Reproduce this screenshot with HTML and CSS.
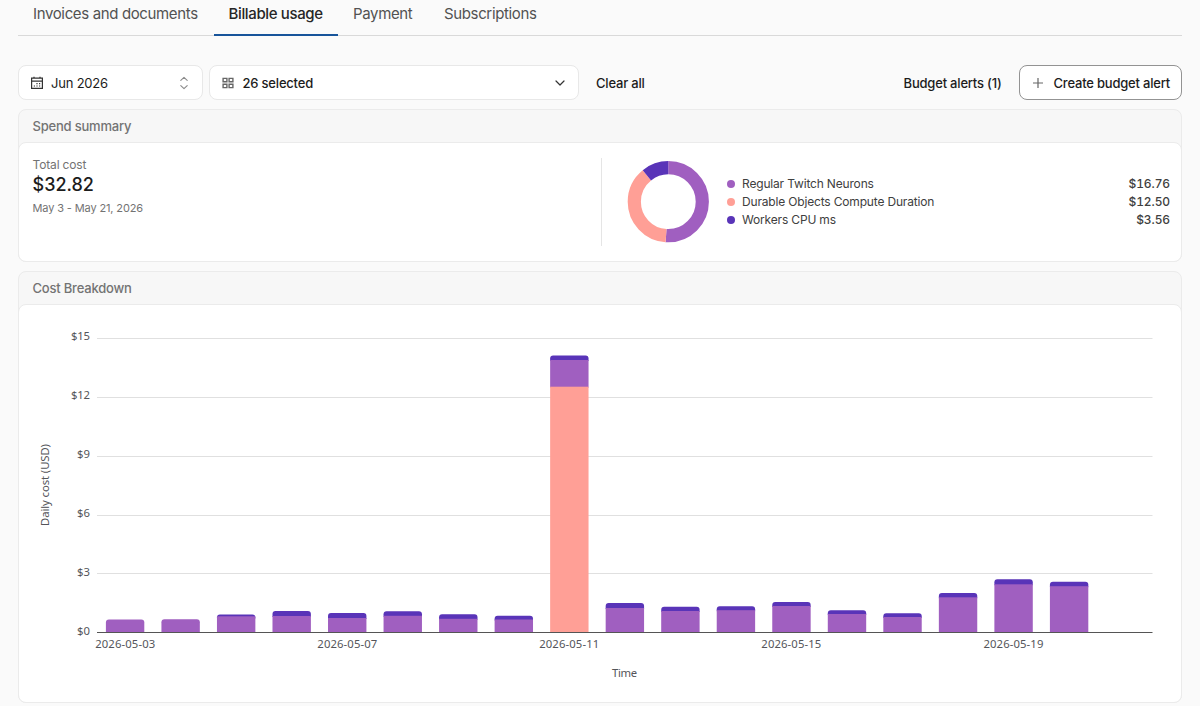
FILE: index.html
```html
<!DOCTYPE html>
<html lang="en">
<head>
<meta charset="utf-8">
<title>Billable usage</title>
<link rel="stylesheet" href="styles.css">
</head>
<body>
<nav class="tabs">
  <a class="tab t1">Invoices and documents</a>
  <a class="tab t2 active">Billable usage</a>
  <a class="tab t3">Payment</a>
  <a class="tab t4">Subscriptions</a>
</nav>
<div class="toolbar">
  <div class="control month">
    <svg width="14" height="14" viewBox="0 0 14 14" fill="none" stroke="#333" stroke-width="1.2"><path d="M1.6 2.1h10.8v10.3H1.6zM1.6 5.2h10.8M4 .8v2M10 .8v2"/><path d="M6.4 7.7h1.2M9 7.7h1.2M3.8 10h1.2M6.4 10h1.2M9 10h1.2"/></svg>
    <span class="label">Jun 2026</span>
    <svg class="end" width="10" height="14" viewBox="0 0 10 14" fill="none" stroke="#8a8a8a" stroke-width="1.1" stroke-linecap="round" stroke-linejoin="round"><path d="M1.8 4.3 5 1.3l3.2 3M1.8 9.7 5 12.7l3.2-3"/></svg>
  </div>
  <div class="control picker">
    <svg width="12" height="12" viewBox="0 0 12 12" fill="none" stroke="#666" stroke-width="1.4"><path d="M1.1 1.4h3.8v3.4H1.1zM7.1 1.4h3.8v3.4H7.1zM1.1 7.2h3.8v3.4H1.1zM7.1 7.2h3.8v3.4H7.1z"/></svg>
    <span class="label">26 selected</span>
    <svg class="end" width="12" height="8" viewBox="0 0 12 8" fill="none" stroke="#333" stroke-width="1.2" stroke-linecap="round" stroke-linejoin="round"><path d="M2 2l4 4 4-4"/></svg>
  </div>
  <span class="link clear">Clear all</span>
  <span class="link alerts">Budget alerts (1)</span>
  <button class="create"><svg width="12" height="12" viewBox="0 0 12 12" fill="none" stroke="#666" stroke-width="1.2"><path d="M6 1v10M1 6h10"/></svg><span>Create budget alert</span></button>
</div>
<section class="card">
  <h2 class="heading">Spend summary</h2>
  <div class="body summary">
    <div class="total">
      <div class="caption">Total cost</div>
      <div class="amount">$32.82</div>
      <div class="range">May 3 - May 21, 2026</div>
    </div>
    <div class="split">
      <svg class="donut" width="82" height="82" viewBox="-41 -41 82 82" fill="none" stroke-width="13.2">
        <g transform="translate(.3 -.3) rotate(-90)">
          <circle r="34" pathLength="100" stroke="#a05fc0" stroke-dasharray="51.07 48.93"/>
          <circle r="34" pathLength="100" stroke="#ff9f96" stroke-dasharray="38.09 61.91" stroke-dashoffset="-51.07"/>
          <circle r="34" pathLength="100" stroke="#5934b8" stroke-dasharray="10.84 89.16" stroke-dashoffset="-89.16"/>
        </g>
      </svg>
      <div class="legend">
        <div class="entry"><i class="dot purple"></i><span>Regular Twitch Neurons</span><b>$16.76</b></div>
        <div class="entry"><i class="dot coral"></i><span>Durable Objects Compute Duration</span><b>$12.50</b></div>
        <div class="entry"><i class="dot indigo"></i><span>Workers CPU ms</span><b>$3.56</b></div>
      </div>
    </div>
  </div>
</section>
<section class="card">
  <h2 class="heading">Cost Breakdown</h2>
  <div class="body">
    <svg class="chart" width="1162" height="397" viewBox="19 305 1162 397">
      <path class="grid" d="M97 338.5H1152.5M97 397.5H1152.5M97 456.5H1152.5M97 515.5H1152.5M97 573.5H1152.5"/>
      <g class="ticks" text-anchor="end">
        <text x="90" y="340.4" textLength="19">$15</text><text x="90" y="399.4" textLength="19">$12</text><text x="90" y="458.4">$9</text>
        <text x="90" y="517.4">$6</text><text x="90" y="576.4">$3</text><text x="90" y="635.4">$0</text>
      </g>
      <g id="bars"></g>
      <path class="axis" d="M97 632.5H1152.5"/>
      <g class="ticks" text-anchor="middle">
        <text x="125.2" y="648" textLength="60">2026-05-03</text>
        <text x="347.3" y="648" textLength="60">2026-05-07</text>
        <text x="569.2" y="648" textLength="60">2026-05-11</text>
        <text x="791.3" y="648" textLength="60">2026-05-15</text>
        <text x="1013.4" y="648" textLength="60">2026-05-19</text>
        <text x="624.6" y="677.4" textLength="25">Time</text>
        <text transform="translate(48.5 485) rotate(-90)" textLength="82">Daily cost (USD)</text>
      </g>
    </svg>
  </div>
</section>
<script src="chart.js"></script>
</body>
</html>
```
FILE: styles.css
```css
* { box-sizing: border-box; }
body { margin: 0; padding: 0 18px; height: 706px; overflow: hidden; background: #fafafa; color: #1c1c1c; font-family: Inter, sans-serif; font-size: 13px; }
svg { display: block; flex: none; }
.tabs { display: flex; height: 36px; border-bottom: 1px solid #d9d9d9; font-size: 15px; letter-spacing: -.36px; line-height: 18px; color: #525252; }
.tab { height: 36px; padding: 4.5px 15px 0; white-space: nowrap; }
.t1 { width: 196px; }
.t2 { width: 124px; padding-left: 14.5px; }
.t3 { width: 91px; }
.active { color: #262626; font-weight: 500; border-bottom: 2px solid #17549a; }
.toolbar { display: flex; align-items: center; height: 35px; margin-top: 29px; font-weight: 500; letter-spacing: -.2px; line-height: 18px; white-space: nowrap; }
.control { display: flex; align-items: center; height: 35px; border: 1px solid #e8e8e8; border-radius: 8px; background: #fff; }
.month { width: 185px; padding: 0 13px 0 11px; gap: 7px; font-weight: 400; }
.picker { width: 370px; margin-left: 6px; padding: 0 12px 0 12px; gap: 8.5px; }
.end { margin-left: auto; }
.clear { margin-left: 17px; }
.alerts { margin-left: auto; margin-right: 17.5px; }
.create { display: flex; align-items: center; width: 163px; height: 35px; padding: 0 0 0 12px; gap: 9.5px; border: 1px solid #939393; border-radius: 8px; background: #fff; color: inherit; font: inherit; letter-spacing: inherit; }
.card { margin-top: 9px; border: 1px solid #ebebeb; border-radius: 8px; background: #f7f7f7; }
.heading { height: 32px; margin: 0; padding: 0 13.5px; font-size: 13px; font-weight: 500; letter-spacing: -.2px; line-height: 33px; color: #737373; }
.body { margin: 0 -1px -1px; border: 1px solid #ebebeb; border-radius: 8px; background: #fff; }
.summary { display: flex; height: 120px; padding: 15px 11px 15px 13.5px; }
.total { flex: 1; }
.caption { line-height: 14px; font-size: 12px; letter-spacing: -.15px; color: #737373; }
.amount { margin-top: 2px; font-size: 18px; line-height: 22px; font-weight: 500; }
.range { margin-top: 5px; font-size: 11px; letter-spacing: -.13px; line-height: 14px; color: #737373; }
.split { display: flex; align-items: center; width: 569px; padding-left: 25px; border-left: 1px solid #e5e5e5; }
.legend { flex: 1; margin-left: 18px; font-size: 12px; color: #404040; }
.entry { display: flex; align-items: center; height: 18px; line-height: 18px; letter-spacing: -.17px; }
.entry b { margin-left: auto; font-weight: 500; letter-spacing: -.1px; font-variant-numeric: tabular-nums; }
.dot { width: 8px; height: 8px; margin-right: 7px; border-radius: 50%; }
.purple { background: #a05fc0; }
.coral { background: #ff9f96; }
.indigo { background: #5934b8; }
.chart { font-family: "Noto Sans", sans-serif; }
.grid { fill: none; stroke: #e0e0e0; }
.axis { fill: none; stroke: #555; }
.ticks { font-size: 11.3px; fill: #54555a; }
```
FILE: chart.js
```js
// Per day: top of the bar, top of the neurons segment, top of the compute segment.
const BASE = 632;
const days = [
  [619.5, 619.5], [619.2, 619.2], [614.4, 616.3], [611, 616], [613, 618], [611.3, 615.8],
  [614.3, 618.8], [615.7, 619.5], [355.4, 360, 386.7], [603, 608], [606.8, 611],
  [606.3, 610.2], [602, 606], [610.3, 614], [613.3, 617], [593, 597.3], [579.3, 584.3], [581.8, 586.2]
];
const W = 38.4, STEP = 55.53, R = 3;
document.getElementById('bars').innerHTML = days.map(([top, mid, low], i) => {
  const x = 105.9 + i * STEP;
  // Each segment runs one pixel under the next so that no seam shows.
  const bottom = mid > top ? Math.max(mid, top + R) + 1 : BASE;
  const shape = `M${x} ${bottom}V${top + R}q0 ${-R} ${R} ${-R}h${W - 2 * R}q${R} 0 ${R} ${R}V${bottom}z`;
  let out = `<path d="${shape}" fill="${mid > top ? '#5934b8' : '#a05fc0'}"/>`;
  if (mid > top) out += `<rect x="${x}" y="${mid}" width="${W}" height="${(low ? low + 1 : BASE) - mid}" fill="#a05fc0"/>`;
  if (low) out += `<rect x="${x}" y="${low}" width="${W}" height="${BASE - low}" fill="#ff9f96"/>`;
  return out;
}).join('');
```
